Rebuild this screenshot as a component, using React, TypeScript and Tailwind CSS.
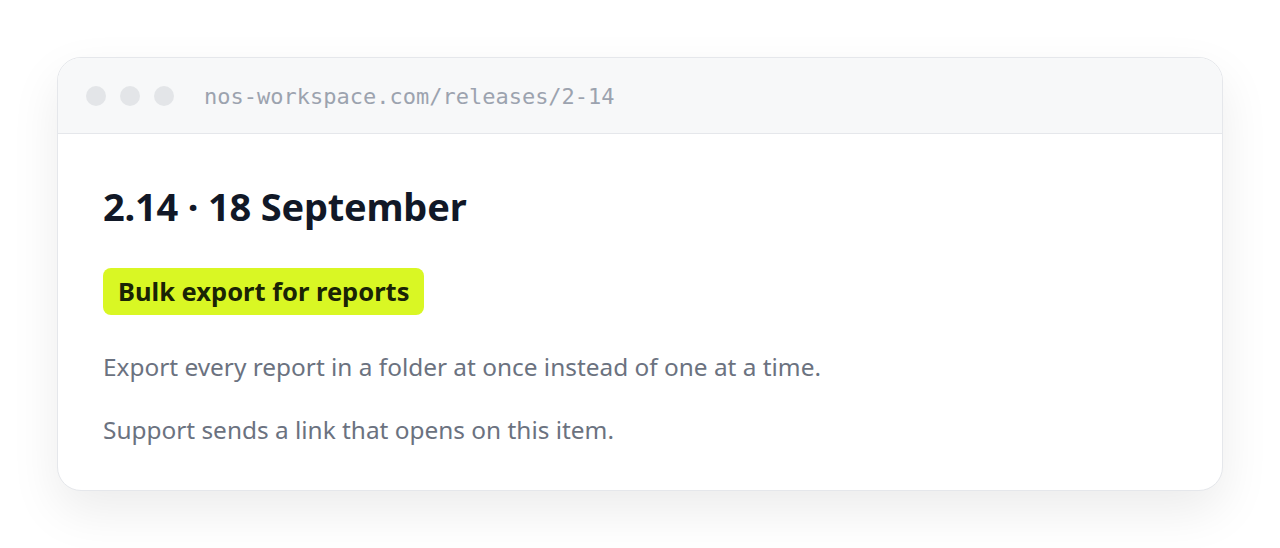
export default function App() {
  return (
    <div className="min-h-[548px] w-full bg-white px-[57px] pt-[57px] pb-[56px]" style={{ fontFamily: '"Noto Sans", "Open Sans", sans-serif' }}>
      <div className="overflow-hidden rounded-[24px] border border-[#e5e7eb] bg-white shadow-[0_20px_50px_rgba(0,0,0,0.08)]">
        <div className="flex h-[76px] items-center gap-[14px] border-b border-[#e5e7eb] bg-[#f7f8f9] pl-[28px]">
          <div className="flex gap-[14px]">
            <span className="h-[20px] w-[20px] rounded-full bg-[#e3e5e8]" />
            <span className="h-[20px] w-[20px] rounded-full bg-[#e3e5e8]" />
            <span className="h-[20px] w-[20px] rounded-full bg-[#e3e5e8]" />
          </div>
          <span className="ml-[16px] pt-[2px] text-[22px] text-[#9ca3af]" style={{ fontFamily: '"DejaVu Sans Mono", "Liberation Mono", monospace' }}>
            nos-workspace.com/releases/2-14
          </span>
        </div>
        <div className="px-[45px] pt-[49px] pb-[44px]">
          <h1 className="text-[38px] font-bold leading-[46px] tracking-[-0.2px] text-[#111827]">2.14 · 18 September</h1>
          <div className="mt-[39px] inline-flex h-[47px] items-center rounded-[8px] bg-[#d9f724] px-[15px] text-[25.5px] font-bold text-[#1a2405]">
            Bulk export for reports
          </div>
          <p className="mt-[36px] text-[24.4px] leading-[32px] text-[#6b7280]">Export every report in a folder at once instead of one at a time.</p>
          <p className="mt-[31px] text-[24.4px] leading-[32px] text-[#6b7280]">Support sends a link that opens on this item.</p>
        </div>
      </div>
    </div>
  );
}
